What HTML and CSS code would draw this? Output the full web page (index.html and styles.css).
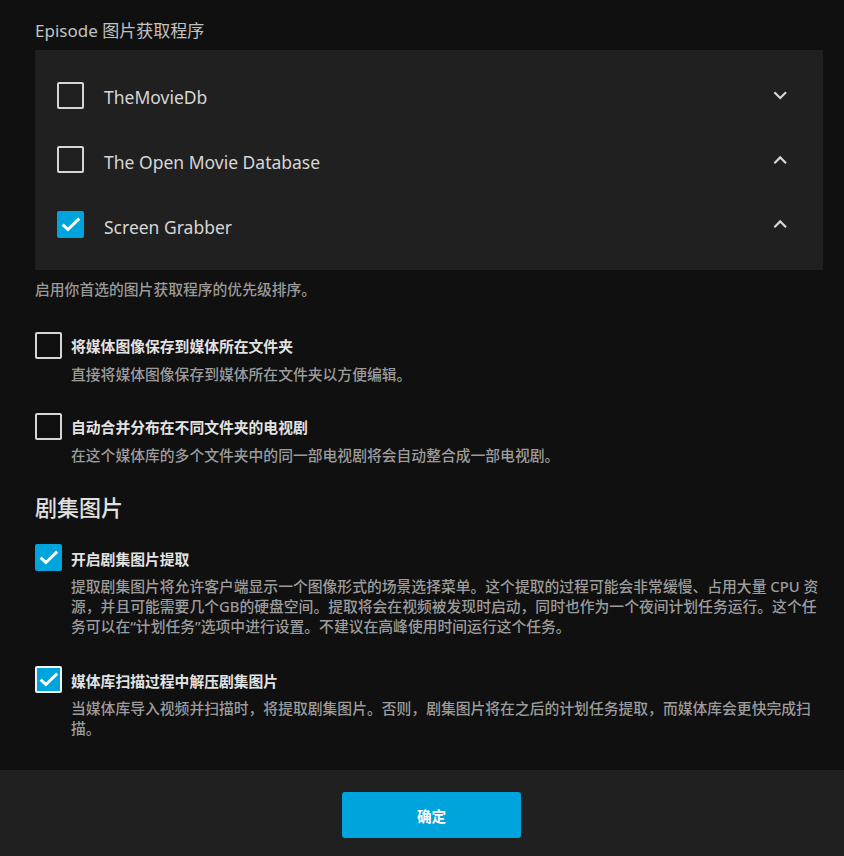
FILE: index.html
```html
<!DOCTYPE html>
<html lang="zh-CN">
<head>
<meta charset="utf-8">
<title>Episode 图片获取程序</title>
<link rel="stylesheet" href="styles.css">
</head>
<body>
<div class="page">
  <div class="content">
    <h3 class="section-label">Episode 图片获取程序</h3>
    <div class="panel">
      <div class="fetcher-row">
        <span class="box"></span>
        <span class="fetcher-name">TheMovieDb</span>
        <button class="order-btn" type="button">
          <svg viewBox="0 0 24 24" width="26.4" height="26.4"><path d="M16.59 8.59L12 13.17 7.41 8.59 6 10l6 6 6-6z" fill="currentColor"/></svg>
        </button>
      </div>
      <div class="fetcher-row">
        <span class="box"></span>
        <span class="fetcher-name">The Open Movie Database</span>
        <button class="order-btn" type="button">
          <svg viewBox="0 0 24 24" width="26.4" height="26.4"><path d="M12 8l-6 6 1.41 1.41L12 10.83l4.59 4.58L18 14z" fill="currentColor"/></svg>
        </button>
      </div>
      <div class="fetcher-row">
        <span class="box checked"><svg viewBox="0 0 27 27" width="27" height="27"><polyline points="5.6,13.6 10.9,18.6 22.2,7.6" fill="none" stroke="#fff" stroke-width="2.9"/></svg></span>
        <span class="fetcher-name">Screen Grabber</span>
        <button class="order-btn" type="button">
          <svg viewBox="0 0 24 24" width="26.4" height="26.4"><path d="M12 8l-6 6 1.41 1.41L12 10.83l4.59 4.58L18 14z" fill="currentColor"/></svg>
        </button>
      </div>
    </div>
    <div class="help">启用你首选的图片获取程序的优先级排序。</div>

    <div class="group group-first">
      <div class="field">
        <span class="box"></span>
        <span class="field-label">将媒体图像保存到媒体所在文件夹</span>
        <div class="field-desc">直接将媒体图像保存到媒体所在文件夹以方便编辑。</div>
      </div>
      <div class="field">
        <span class="box"></span>
        <span class="field-label">自动合并分布在不同文件夹的电视剧</span>
        <div class="field-desc">在这个媒体库的多个文件夹中的同一部电视剧将会自动整合成一部电视剧。</div>
      </div>
    </div>

    <h2 class="section-heading">剧集图片</h2>

    <div class="group group-second">
      <div class="field">
        <span class="box checked"><svg viewBox="0 0 27 27" width="27" height="27"><polyline points="5.6,13.6 10.9,18.6 22.2,7.6" fill="none" stroke="#fff" stroke-width="2.9"/></svg></span>
        <span class="field-label">开启剧集图片提取</span>
        <div class="field-desc">提取剧集图片将允许客户端显示一个图像形式的场景选择菜单。这个提取的过程可能会非常缓慢、占用大量 CPU 资源，并且可能需要几个GB的硬盘空间。提取将会在视频被发现时启动，同时也作为一个夜间计划任务运行。这个任务可以在“计划任务”选项中进行设置。不建议在高峰使用时间运行这个任务。</div>
      </div>
      <div class="field">
        <span class="box checked focused"><svg viewBox="0 0 27 27" width="27" height="27"><polyline points="5.6,13.6 10.9,18.6 22.2,7.6" fill="none" stroke="#fff" stroke-width="2.9"/></svg></span>
        <span class="field-label">媒体库扫描过程中解压剧集图片</span>
        <div class="field-desc">当媒体库导入视频并扫描时，将提取剧集图片。否则，剧集图片将在之后的计划任务提取，而媒体库会更快完成扫描。</div>
      </div>
    </div>
  </div>

  <div class="footer">
    <button class="primary-btn" type="button">确定</button>
  </div>
</div>
</body>
</html>
```

FILE: styles.css
```css
html, body {
  margin: 0;
  padding: 0;
  background: #101010;
}

body {
  font-family: "Noto Sans", "Noto Sans CJK SC", sans-serif;
  color: #dddddd;
}

.page {
  display: flex;
  flex-direction: column;
  height: 856px;
  overflow: hidden;
}

.content {
  flex: 1;
  padding: 19px 21px 0 35px;
}

.section-label {
  margin: 0 0 7px;
  font-size: 17px;
  line-height: 24px;
  font-weight: 400;
  color: #c2c2c2;
}

.panel {
  background: #202020;
  padding: 13px 23px 13px 22px;
}

.fetcher-row {
  height: 64.67px;
  display: flex;
  align-items: center;
}

.box {
  box-sizing: border-box;
  flex: none;
  width: 27px;
  height: 27px;
  border: 2px solid #d6d6d6;
  border-radius: 2px;
  display: block;
  position: relative;
}

.box.checked {
  border: none;
  background: #00a4dc;
}

.box.checked svg {
  display: block;
}

.box.checked.focused {
  border: 2px solid #f2f2f2;
}

.box.checked.focused svg {
  margin: -2px;
}

.fetcher-name {
  flex: 1;
  margin-left: 20px;
  padding-top: 4px;
  font-size: 17.5px;
  line-height: 24px;
  font-weight: 400;
  color: #d6d6d6;
}

.order-btn {
  flex: none;
  width: 40px;
  height: 40px;
  padding: 0;
  border: none;
  background: transparent;
  color: #d6d6d6;
  display: flex;
  align-items: center;
  justify-content: center;
}

.order-btn svg {
  display: block;
}

.help {
  margin-top: 9px;
  font-size: 14.8px;
  line-height: 20px;
  font-weight: 500;
  color: #9a9a9a;
}

.group {
  display: flex;
  flex-direction: column;
  gap: 29px;
}

.group-first {
  margin-top: 33px;
}

.group-second {
  gap: 30px;
}

.field {
  display: grid;
  grid-template-columns: 27px 1fr;
  column-gap: 9px;
}

.field > .box {
  grid-column: 1;
  grid-row: 1;
}

.field-label {
  grid-column: 2;
  grid-row: 1;
  align-self: center;
  padding-top: 2px;
  font-size: 14.8px;
  line-height: 20px;
  font-weight: 700;
  color: #e2e2e2;
}

.field-desc {
  grid-column: 2;
  grid-row: 2;
  margin-top: 5px;
  font-size: 14.8px;
  line-height: 20px;
  font-weight: 500;
  color: #9c9c9c;
}

.section-heading {
  margin: 27px 0 22.5px;
  font-size: 22px;
  line-height: 30px;
  font-weight: 500;
  color: #e0e0e0;
}

.footer {
  flex: none;
  height: 86px;
  box-sizing: border-box;
  background: #202020;
  padding: 22px 0 0 19px;
  display: flex;
  justify-content: center;
  align-items: flex-start;
}

.primary-btn {
  width: 179px;
  height: 46px;
  border: none;
  border-radius: 3px;
  background: #00a4dc;
  color: #ffffff;
  font-family: "Noto Sans", "Noto Sans CJK SC", sans-serif;
  font-size: 14.6px;
  font-weight: 700;
  padding: 0;
}
```
